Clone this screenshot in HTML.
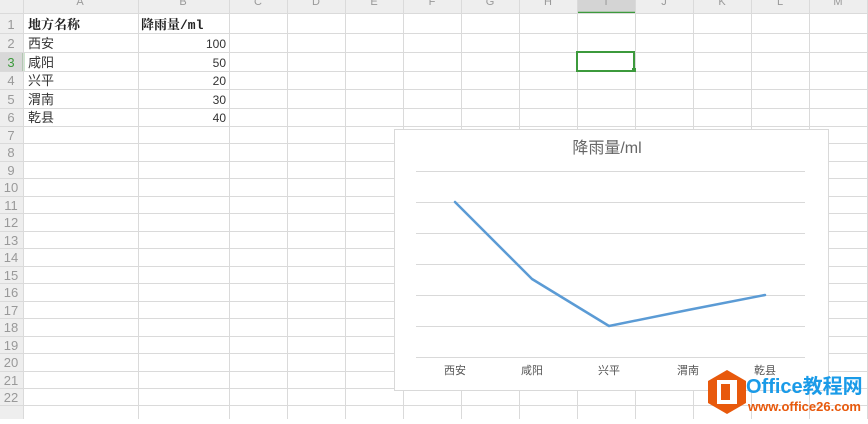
<!DOCTYPE html>
<html><head><meta charset="utf-8"><style>
body{margin:0;width:868px;height:419px;overflow:hidden;background:#fff;font-family:"Liberation Sans","Noto Sans CJK SC",sans-serif}
svg text{font-family:"Liberation Sans","Noto Sans CJK SC",sans-serif}
</style></head><body>
<svg width="868" height="419" xmlns="http://www.w3.org/2000/svg">
<rect x="0" y="0" width="868" height="13" fill="#eeeeee"/>
<rect x="0" y="0" width="23" height="419" fill="#eeeeee"/>
<rect x="577" y="0" width="58" height="13" fill="#d4d4d4"/>
<line x1="577" y1="12.5" x2="635" y2="12.5" stroke="#3c9a3c" stroke-width="1.5"/>
<rect x="0" y="52" width="23" height="19" fill="#d8d8d8"/>
<line x1="23.5" y1="52" x2="23.5" y2="71" stroke="#3c9a3c" stroke-width="1.5"/>
<g stroke="#dadada" stroke-width="1">
<line x1="0" y1="13.5" x2="868" y2="13.5"/>
<line x1="23.5" y1="0" x2="23.5" y2="419"/>
<line x1="138.5" y1="0" x2="138.5" y2="419"/>
<line x1="229.5" y1="0" x2="229.5" y2="419"/>
<line x1="287.5" y1="0" x2="287.5" y2="419"/>
<line x1="345.5" y1="0" x2="345.5" y2="419"/>
<line x1="403.5" y1="0" x2="403.5" y2="419"/>
<line x1="461.5" y1="0" x2="461.5" y2="419"/>
<line x1="519.5" y1="0" x2="519.5" y2="419"/>
<line x1="577.5" y1="0" x2="577.5" y2="419"/>
<line x1="635.5" y1="0" x2="635.5" y2="419"/>
<line x1="693.5" y1="0" x2="693.5" y2="419"/>
<line x1="751.5" y1="0" x2="751.5" y2="419"/>
<line x1="809.5" y1="0" x2="809.5" y2="419"/>
<line x1="867.5" y1="0" x2="867.5" y2="419"/>
<line x1="0" y1="33.5" x2="868" y2="33.5"/>
<line x1="0" y1="52.5" x2="868" y2="52.5"/>
<line x1="0" y1="71.5" x2="868" y2="71.5"/>
<line x1="0" y1="89.5" x2="868" y2="89.5"/>
<line x1="0" y1="108.5" x2="868" y2="108.5"/>
<line x1="0" y1="126.5" x2="868" y2="126.5"/>
<line x1="0" y1="143.5" x2="868" y2="143.5"/>
<line x1="0" y1="161.5" x2="868" y2="161.5"/>
<line x1="0" y1="178.5" x2="868" y2="178.5"/>
<line x1="0" y1="196.5" x2="868" y2="196.5"/>
<line x1="0" y1="213.5" x2="868" y2="213.5"/>
<line x1="0" y1="231.5" x2="868" y2="231.5"/>
<line x1="0" y1="248.5" x2="868" y2="248.5"/>
<line x1="0" y1="266.5" x2="868" y2="266.5"/>
<line x1="0" y1="283.5" x2="868" y2="283.5"/>
<line x1="0" y1="301.5" x2="868" y2="301.5"/>
<line x1="0" y1="318.5" x2="868" y2="318.5"/>
<line x1="0" y1="336.5" x2="868" y2="336.5"/>
<line x1="0" y1="353.5" x2="868" y2="353.5"/>
<line x1="0" y1="371.5" x2="868" y2="371.5"/>
<line x1="0" y1="388.5" x2="868" y2="388.5"/>
<line x1="0" y1="405.5" x2="868" y2="405.5"/>
</g>
<g font-size="11" fill="#999" text-anchor="middle">
<text x="80" y="5">A</text><text x="183" y="5">B</text><text x="258" y="5">C</text><text x="316" y="5">D</text><text x="374" y="5">E</text><text x="432" y="5">F</text><text x="490" y="5">G</text><text x="548" y="5">H</text><text x="606" y="5">I</text><text x="664" y="5">J</text><text x="722" y="5">K</text><text x="780" y="5">L</text><text x="838" y="5">M</text>
</g>
<g font-size="13" fill="#999" text-anchor="middle">
<text x="11" y="29">1</text><text x="11" y="48">2</text><text x="11" y="67" fill="#3c9a3c">3</text><text x="11" y="85">4</text><text x="11" y="104">5</text><text x="11" y="122">6</text>
<text x="11" y="140">7</text><text x="11" y="157">8</text><text x="11" y="175">9</text><text x="11" y="192">10</text><text x="11" y="210">11</text><text x="11" y="227">12</text><text x="11" y="245">13</text><text x="11" y="262">14</text><text x="11" y="280">15</text><text x="11" y="297">16</text><text x="11" y="315">17</text><text x="11" y="332">18</text><text x="11" y="350">19</text><text x="11" y="367">20</text><text x="11" y="385">21</text><text x="11" y="402">22</text>
</g>
<g font-size="13" fill="#222">
<text x="28" y="29" font-weight="bold" style="font-family:'Noto Serif CJK SC',serif">地方名称</text>
<text x="141" y="29" font-weight="bold" style="font-family:'Liberation Mono','Noto Serif CJK SC',serif">降雨量/ml</text>
<g style="font-family:'Noto Serif CJK SC',serif" fill="#333"><text x="28" y="48">西安</text><text x="28" y="67">咸阳</text><text x="28" y="85">兴平</text><text x="28" y="104">渭南</text><text x="28" y="122">乾县</text></g>
<g text-anchor="end" fill="#333" style="font-family:'Liberation Sans',sans-serif" font-size="12"><text x="226" y="48">100</text><text x="226" y="67">50</text><text x="226" y="85">20</text><text x="226" y="104">30</text><text x="226" y="122">40</text></g>
</g>
<rect x="577" y="52" width="57" height="19" fill="none" stroke="#3c9a3c" stroke-width="2"/>
<rect x="632" y="68" width="4" height="4" fill="#3c9a3c"/>
<rect x="394.5" y="129.5" width="434" height="261" fill="#fff" stroke="#d9d9d9"/>
<text x="607" y="153" font-size="16" fill="#666" text-anchor="middle">降雨量/ml</text>
<g stroke="#d9d9d9">
<line x1="416" y1="171.5" x2="805" y2="171.5"/><line x1="416" y1="202.5" x2="805" y2="202.5"/><line x1="416" y1="233.5" x2="805" y2="233.5"/><line x1="416" y1="264.5" x2="805" y2="264.5"/><line x1="416" y1="295.5" x2="805" y2="295.5"/><line x1="416" y1="326.5" x2="805" y2="326.5"/><line x1="416" y1="357.5" x2="805" y2="357.5"/>
</g>
<polyline points="455,202 532,279 609,326 688,310 765,295" fill="none" stroke="#5b9bd5" stroke-width="2.5" stroke-linejoin="round" stroke-linecap="round"/>
<g font-size="11" fill="#555" text-anchor="middle"><text x="455" y="374">西安</text><text x="532" y="374">咸阳</text><text x="609" y="374">兴平</text><text x="688" y="374">渭南</text><text x="765" y="374">乾县</text></g>
<polygon points="727,370 746,381 746,403 727,414 708,403 708,381" fill="#e8590c"/>
<rect x="717" y="380" width="20" height="24" fill="#fff"/>
<rect x="721" y="384" width="9" height="16" fill="#e8590c"/>
<text x="746" y="393" font-size="20" font-weight="bold" fill="#1a9be8" style="font-family:'Liberation Sans','Noto Sans CJK SC',sans-serif">Office教程网</text>
<text x="748" y="411" font-size="13" font-weight="bold" fill="#e8590c">www.office26.com</text>
</svg>
</body></html>
